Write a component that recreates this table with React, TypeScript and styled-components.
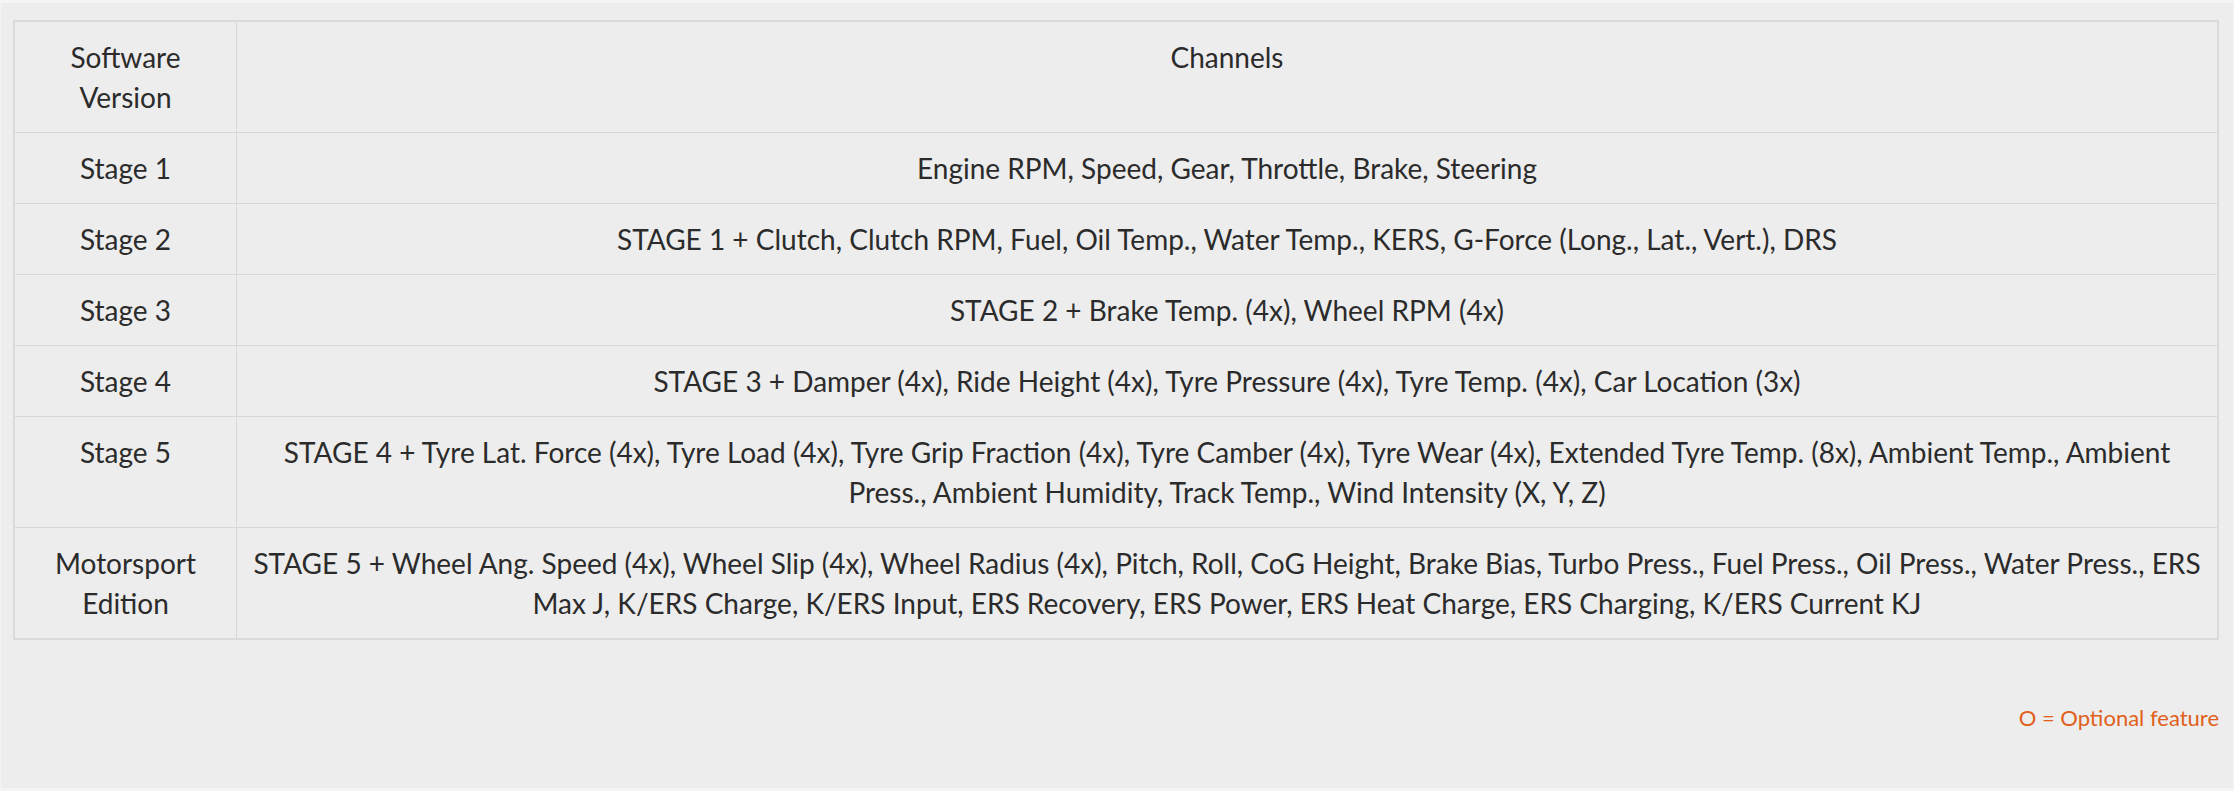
import styled, { createGlobalStyle } from 'styled-components';

const GlobalStyle = createGlobalStyle`
  html, body {
    margin: 0;
    padding: 0;
    background: #f4f4f4;
  }
  body {
    font-family: Lato, "Open Sans", sans-serif;
    color: #2b2b2b;
  }
`;

const Page = styled.div`
  margin: 3px 1px 0 1px;
  height: 785px;
  box-sizing: border-box;
  padding: 17px 14px 0 12px;
  background: #ededed;
`;

const Table = styled.table`
  width: 100%;
  border-collapse: collapse;
  border: 2px solid #dadada;
  font-size: 28px;
  line-height: 40px;
`;

const Cell = styled.td<{ $first?: boolean }>`
  border: 1px solid #d8d8d8;
  padding: 15px 8px;
  text-align: center;
  vertical-align: top;
  width: ${(p) => (p.$first ? '205px' : 'auto')};
`;

const Note = styled.p`
  margin: 63px 0 0;
  text-align: right;
  font-size: 22px;
  line-height: 30px;
  color: #e0601a;
`;

interface Row {
  version: string[];
  channels: string;
}

const rows: Row[] = [
  { version: ['Stage 1'], channels: 'Engine RPM, Speed, Gear, Throttle, Brake, Steering' },
  {
    version: ['Stage 2'],
    channels:
      'STAGE 1 + Clutch, Clutch RPM, Fuel, Oil Temp., Water Temp., KERS, G-Force (Long., Lat., Vert.), DRS',
  },
  { version: ['Stage 3'], channels: 'STAGE 2 + Brake Temp. (4x), Wheel RPM (4x)' },
  {
    version: ['Stage 4'],
    channels:
      'STAGE 3 + Damper (4x), Ride Height (4x), Tyre Pressure (4x), Tyre Temp. (4x), Car Location (3x)',
  },
  {
    version: ['Stage 5'],
    channels:
      'STAGE 4 + Tyre Lat. Force (4x), Tyre Load (4x), Tyre Grip Fraction (4x), Tyre Camber (4x), Tyre Wear (4x), Extended Tyre Temp. (8x), Ambient Temp., Ambient Press., Ambient Humidity, Track Temp., Wind Intensity (X, Y, Z)',
  },
  {
    version: ['Motorsport', 'Edition'],
    channels:
      'STAGE 5 + Wheel Ang. Speed (4x), Wheel Slip (4x), Wheel Radius (4x), Pitch, Roll, CoG Height, Brake Bias, Turbo Press., Fuel Press., Oil Press., Water Press., ERS Max J, K/ERS Charge, K/ERS Input, ERS Recovery, ERS Power, ERS Heat Charge, ERS Charging, K/ERS Current KJ',
  },
];

const Lines = ({ parts }: { parts: string[] }) => (
  <>
    {parts.map((p, i) => (
      <span key={i}>
        {i > 0 && <br />}
        {p}
      </span>
    ))}
  </>
);

const App = () => (
  <>
    <GlobalStyle />
    <Page>
      <Table>
        <tbody>
          <tr>
            <Cell $first>
              <Lines parts={['Software', 'Version']} />
            </Cell>
            <Cell>Channels</Cell>
          </tr>
          {rows.map((r) => (
            <tr key={r.version.join(' ')}>
              <Cell $first>
                <Lines parts={r.version} />
              </Cell>
              <Cell>{r.channels}</Cell>
            </tr>
          ))}
        </tbody>
      </Table>
      <Note>O = Optional feature</Note>
    </Page>
  </>
);

export default App;
